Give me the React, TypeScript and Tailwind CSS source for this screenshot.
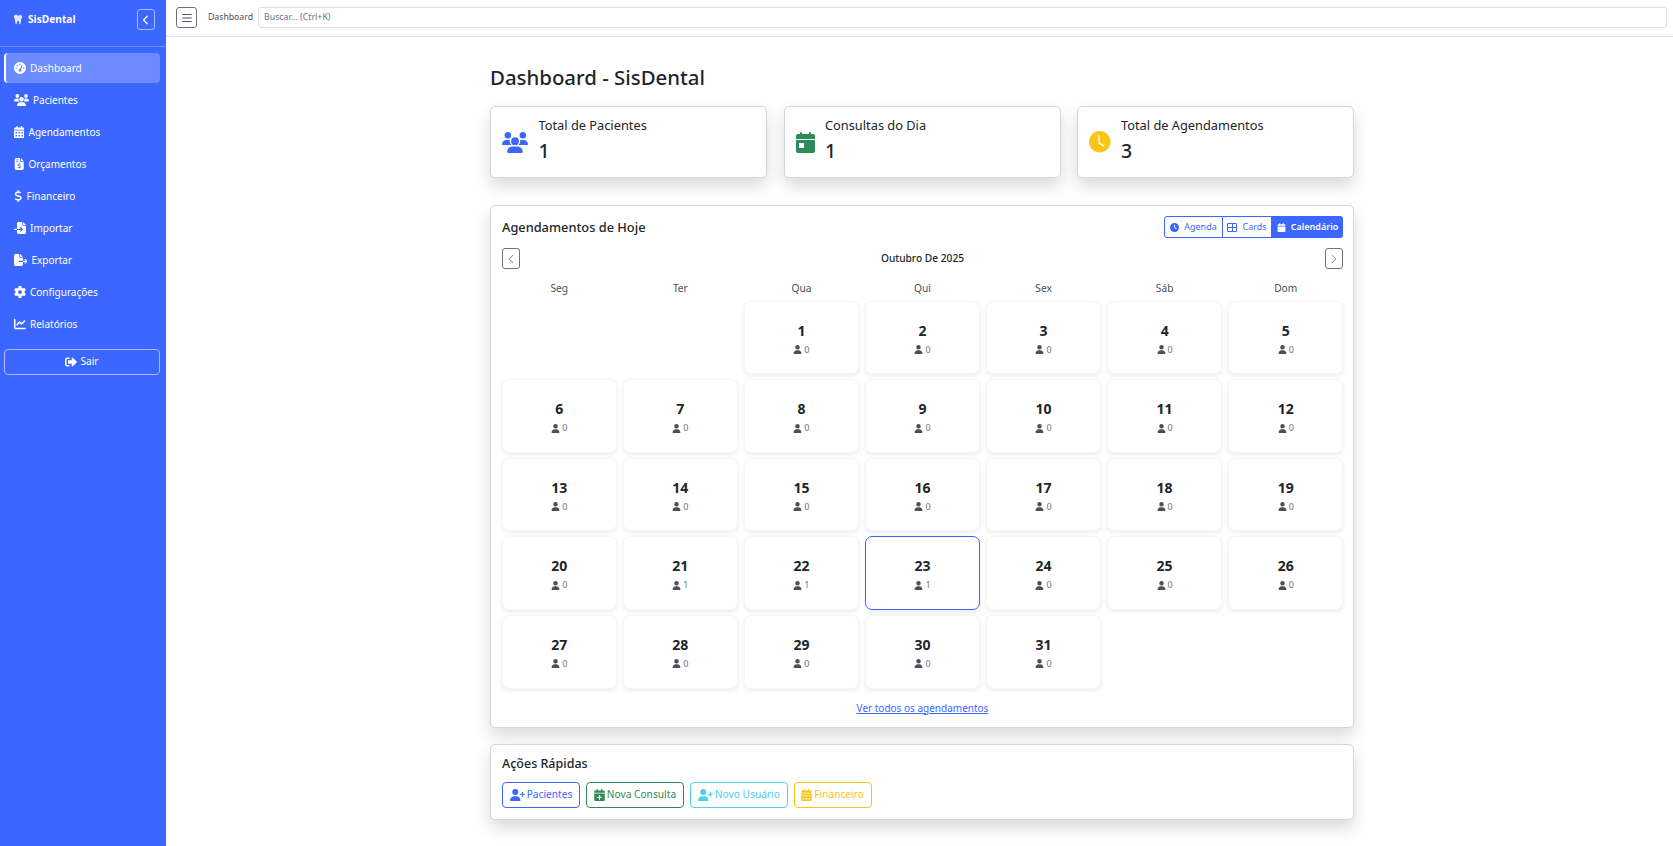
import React from "react";
import {
  FaGaugeHigh, FaUsers, FaCalendarDays, FaFileInvoiceDollar, FaDollarSign, FaFileImport, FaFileExport,
  FaGear, FaChartLine, FaChevronLeft, FaUser, FaClock, FaCalendar, FaUserPlus, FaCalendarPlus, FaTooth,
} from "react-icons/fa6";
import { FaSignOutAlt } from "react-icons/fa";
import { BsClockFill, BsList, BsChevronLeft, BsChevronRight } from "react-icons/bs";

const nav: [any, string, string][] = [
  [FaGaugeHigh, "Dashboard", "w-[12px]"],
  [FaUsers, "Pacientes", "w-[15px]"],
  [FaCalendarDays, "Agendamentos", "w-[10.5px]"],
  [FaFileInvoiceDollar, "Orçamentos", "w-[10.5px]"],
  [FaDollarSign, "Financeiro", "w-[8.5px]"],
  [FaFileImport, "Importar", "w-[12px]"],
  [FaFileExport, "Exportar", "w-[13.5px]"],
  [FaGear, "Configurações", "w-[12px]"],
  [FaChartLine, "Relatórios", "w-[12px]"],
];

const counts: Record<number, number> = { 21: 1, 22: 1, 23: 1 };
const weekdays = ["Seg", "Ter", "Qua", "Qui", "Sex", "Sáb", "Dom"];

function Stat({ icon, label, value }: { icon: React.ReactNode; label: string; value: string }) {
  return (
    <div className="flex h-[72px] items-center gap-[10.5px] rounded-[5px] border border-[#d4d6d8] bg-white pl-[11px] shadow-[0_8px_16px_rgba(0,0,0,0.15)]">
      {icon}
      <div className="flex flex-col pb-[5px]">
        <span className="text-[12.8px] leading-[18px] text-[#212529]">{label}</span>
        <span className="mt-[5px] text-[19.5px] font-medium leading-[24px] text-[#212529]">{value}</span>
      </div>
    </div>
  );
}

function Day({ n }: { n: number }) {
  return (
    <div
      className={`flex h-[73.8px] flex-col items-center rounded-[7px] bg-white pt-[19px] shadow-[0_2px_4px_rgba(0,0,0,0.075)] ${
        n === 23 ? "border border-[#3b66ff]" : "border border-[#f6f6f6]"
      }`}
    >
      <span className="text-[14px] font-bold leading-[20px] text-[#212529]">{n}</span>
      <span className="mt-[2px] flex items-center gap-[2px] text-[9px] leading-[14px] text-[#6c757d]">
        <FaUser className="h-[9px] w-[9px] text-[#495057]" />
        {counts[n] ?? 0}
      </span>
    </div>
  );
}

function QuickBtn({ icon, label, cls }: { icon: React.ReactNode; label: string; cls: string }) {
  return (
    <button className={`flex h-[26px] items-center justify-center gap-[2px] rounded-[4px] border text-[10.2px] ${cls}`}>
      {icon}
      {label}
    </button>
  );
}

export default function App() {
  return (
    <div className="flex h-[846px] w-full overflow-hidden bg-white font-['Noto_Sans','Open_Sans',sans-serif] text-[#212529]">
      <aside className="flex w-[166px] shrink-0 flex-col bg-[#3b66ff] text-white">
        <div className="flex h-[47px] items-center justify-between border-b border-[#6f8eff] pb-[7px] pl-[12px] pr-[11px]">
          <span className="flex items-center gap-[4px] text-[10.2px] font-bold">
            <FaTooth className="h-[11px] w-[12px] text-[#e4e9ff]" />
            SisDental
          </span>
          <span className="flex h-[21px] w-[18px] items-center justify-center rounded-[3px] border border-[#a9bcff]">
            <FaChevronLeft className="h-[10px] w-[10px]" />
          </span>
        </div>
        <nav className="flex flex-col pl-[4px] pr-[6px] pt-[6px]">
          {nav.map(([Icon, label, w], i) => (
            <a
              key={label}
              className={`flex h-[30px] items-center gap-[4.5px] text-[10px] ${
                i === 0 ? "rounded-[4px] border-l-2 border-white bg-[#6b8bff] pl-[7.5px]" : "mt-[2px] pl-[9.5px]"
              }`}
            >
              <Icon className={`h-[12px] shrink-0 ${w}`} />
              {label}
            </a>
          ))}
          <button className="mt-[10px] flex h-[26px] items-center justify-center gap-[3px] rounded-[4px] border border-[#a9bcff] text-[10.2px]">
            <FaSignOutAlt className="h-[12px] w-[12px]" />
            Sair
          </button>
        </nav>
      </aside>

      <div className="flex min-w-0 flex-1 flex-col">
        <header className="flex h-[37px] shrink-0 items-start gap-[11px] border-b border-[#dee2e6] pl-[10px] pr-[6px] pt-[7px]">
          <span className="flex h-[21px] w-[21px] items-center justify-center rounded-[3px] border border-[#6c757d] text-[#495057]">
            <BsList className="h-[14px] w-[14px]" />
          </span>
          <span className="flex h-[21px] items-center text-[8.7px] text-[#495057]">Dashboard</span>
          <div className="-ml-[6px] flex h-[21px] flex-1 items-center rounded-[3px] border border-[#dee2e6] pl-[5px] text-[8.8px] text-[#6c757d]">
            Buscar... (Ctrl+K)
          </div>
        </header>

        <div className="pl-[5px]">
          <main className="mx-auto w-[864px] pt-[27px]">
            <h1 className="text-[20.4px] font-medium leading-[27px] text-[#212529]">Dashboard - SisDental</h1>

            <div className="mt-[15px] grid grid-cols-3 gap-[16.5px]">
              <Stat icon={<FaUsers className="h-[21px] w-[26px] text-[#3b66ff]" />} label="Total de Pacientes" value="1" />
              <Stat
                icon={
                  <svg viewBox="0 0 19 21" className="h-[21px] w-[19px]" fill="#2e8b57">
                    <rect x="4" y="0" width="2" height="4" rx="1" />
                    <rect x="13" y="0" width="2" height="4" rx="1" />
                    <path d="M2 2h15a2 2 0 0 1 2 2v3H0V4a2 2 0 0 1 2-2z" />
                    <path fillRule="evenodd" d="M0 8h19v11a2 2 0 0 1-2 2H2a2 2 0 0 1-2-2zM3 11v5h5v-5z" />
                  </svg>
                }
                label="Consultas do Dia"
                value="1"
              />
              <Stat icon={<BsClockFill className="h-[21.5px] w-[21.5px] text-[#fcc419]" />} label="Total de Agendamentos" value="3" />
            </div>

            <section className="mt-[27px] h-[523px] rounded-[5px] border border-[#d4d6d8] bg-white pl-[11px] pr-[10px] pt-[10px] shadow-[0_8px_16px_rgba(0,0,0,0.15)]">
              <div className="flex h-[22px] items-center justify-between">
                <h2 className="mt-[2px] text-[12.8px] font-medium text-[#212529]">Agendamentos de Hoje</h2>
                <div className="flex h-[22px] text-[9px]">
                  <span className="flex w-[59px] items-center justify-center gap-[5px] rounded-l-[3px] border border-[#3b66ff] text-[#3b66ff]">
                    <FaClock className="h-[9px] w-[9px]" />
                    Agenda
                  </span>
                  <span className="flex w-[49px] items-center justify-center gap-[5px] border border-l-0 border-[#3b66ff] text-[#3b66ff]">
                    <span className="grid h-[9px] w-[10px] grid-cols-2 gap-[1px] rounded-[1px] border border-[#3b66ff] bg-[#3b66ff]">
                      <i className="bg-white" />
                      <i className="bg-white" />
                      <i className="bg-white" />
                      <i className="bg-white" />
                    </span>
                    Cards
                  </span>
                  <span className="flex w-[71px] items-center justify-center gap-[5px] rounded-r-[3px] bg-[#3b66ff] font-semibold text-white">
                    <FaCalendar className="h-[9px] w-[9px]" />
                    Calendário
                  </span>
                </div>
              </div>

              <div className="mt-[10px] flex h-[21px] items-center justify-between">
                <span className="flex h-[21px] w-[18px] items-center justify-center rounded-[3px] border border-[#6c757d] text-[#6c757d]">
                  <BsChevronLeft className="h-[10px] w-[10px]" />
                </span>
                <span className="text-[10.2px] font-medium text-[#212529]">Outubro De 2025</span>
                <span className="flex h-[21px] w-[18px] items-center justify-center rounded-[3px] border border-[#6c757d] text-[#6c757d]">
                  <BsChevronRight className="h-[10px] w-[10px]" />
                </span>
              </div>

              <div className="mt-[9px] grid grid-cols-7 gap-x-[6.5px]">
                {weekdays.map((d) => (
                  <div key={d} className="h-[20px] text-center text-[10.2px] leading-[20px] text-[#495057]">
                    {d}
                  </div>
                ))}
              </div>

              <div className="mt-[2.5px] grid grid-cols-7 gap-x-[6.5px] gap-y-[4.8px]">
                <div />
                <div />
                {Array.from({ length: 31 }, (_, i) => (
                  <Day key={i} n={i + 1} />
                ))}
              </div>

              <div className="mt-[5px] text-center">
                <a className="text-[10px] text-[#3b66ff] underline">Ver todos os agendamentos</a>
              </div>
            </section>

            <section className="mt-[16px] h-[76px] rounded-[5px] border border-[#d4d6d8] bg-white px-[11px] pt-[9px] shadow-[0_8px_16px_rgba(0,0,0,0.15)]">
              <h2 className="text-[12.5px] font-medium leading-[20px] text-[#212529]">Ações Rápidas</h2>
              <div className="mt-[8px] flex gap-[5.7px]">
                <QuickBtn icon={<FaUserPlus className="h-[12px] w-[15px]" />} label="Pacientes" cls="w-[78px] border-[#3b66ff] text-[#3b66ff]" />
                <QuickBtn icon={<FaCalendarPlus className="h-[12px] w-[11px]" />} label="Nova Consulta" cls="w-[98.5px] border-[#2e8b57] text-[#2e8b57]" />
                <QuickBtn icon={<FaUserPlus className="h-[12px] w-[15px]" />} label="Novo Usuário" cls="w-[98px] border-[#4dcfef] text-[#4dcfef]" />
                <QuickBtn icon={<FaCalendarDays className="h-[12px] w-[11px]" />} label="Financeiro" cls="w-[78px] border-[#fcc419] text-[#fcc419]" />
              </div>
            </section>
          </main>
        </div>
      </div>
    </div>
  );
}
